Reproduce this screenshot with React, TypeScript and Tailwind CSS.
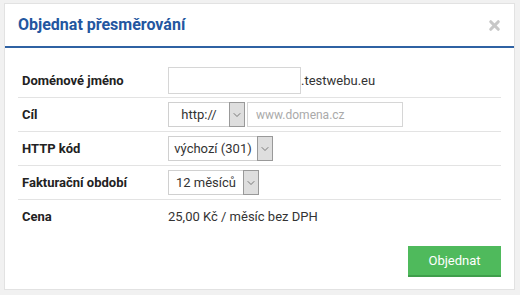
import { ChevronDown, X } from "lucide-react";

const Row = ({ label, children, last = false }: { label: string; children: React.ReactNode; last?: boolean }) => (
  <div className={`flex items-center h-[34px] ${last ? "" : "border-b border-[#e3e3e3]"}`}>
    <div className="w-[150px] pl-1 text-[13px] font-bold text-[#222]">{label}</div>
    <div className="flex items-center">{children}</div>
  </div>
);

const Select = ({ value, width }: { value: string; width: string }) => (
  <div className={`flex h-[25px] border border-[#d0d0d0] bg-white ${width}`}>
    <div className="flex-1 flex items-center justify-center text-[13px] text-[#333]">{value}</div>
    <div className="w-[16px] flex items-center justify-center bg-[#dedede] border border-[#999] -my-px -mr-px">
      <ChevronDown className="w-3 h-3 text-[#555]" strokeWidth={1.5} />
    </div>
  </div>
);

export default function App() {
  return (
    <div className="w-[520px] h-[295px] bg-[#f1f1f1] pt-[3px] pl-[4px]" style={{ fontFamily: "Roboto, 'Liberation Sans', sans-serif" }}>
      <div className="w-[511px] h-[287px] bg-white border border-[#e2e2e2] flex flex-col">
        <div className="h-[44px] flex items-center justify-between pl-[13px] pr-[12px] border-b-2 border-[#2f62a3]">
          <h3 className="text-[16px] font-bold text-[#2356a0]">Objednat přesměrování</h3>
          <X className="w-[15px] h-[15px] text-[#c8c8c8]" strokeWidth={5} />
        </div>
        <div className="px-[13px] pt-[16px]">
          <Row label="Doménové jméno">
            <input className="w-[133px] h-[27px] border border-[#d6d6d6] outline-none" />
            <span className="text-[13px] text-[#333]">.testwebu.eu</span>
          </Row>
          <Row label="Cíl">
            <Select value="http://" width="w-[77px]" />
            <input
              placeholder="www.domena.cz"
              className="ml-[2px] w-[156px] h-[25px] border border-[#d6d6d6] px-2 text-[12px] outline-none placeholder:text-[#aaa]"
            />
          </Row>
          <Row label="HTTP kód">
            <Select value="výchozí (301)" width="w-[105px]" />
          </Row>
          <Row label="Fakturační období">
            <Select value="12 měsíců" width="w-[91px]" />
          </Row>
          <Row label="Cena" last>
            <span className="text-[13px] text-[#333]">25,00 Kč / měsíc bez DPH</span>
          </Row>
        </div>
        <div className="flex justify-end px-[13px] mt-[12px]">
          <button className="w-[93px] h-[31px] bg-[#4fba5c] border-b-2 border-[#3f9e4b] text-white text-[13px]">
            Objednat
          </button>
        </div>
      </div>
    </div>
  );
}
